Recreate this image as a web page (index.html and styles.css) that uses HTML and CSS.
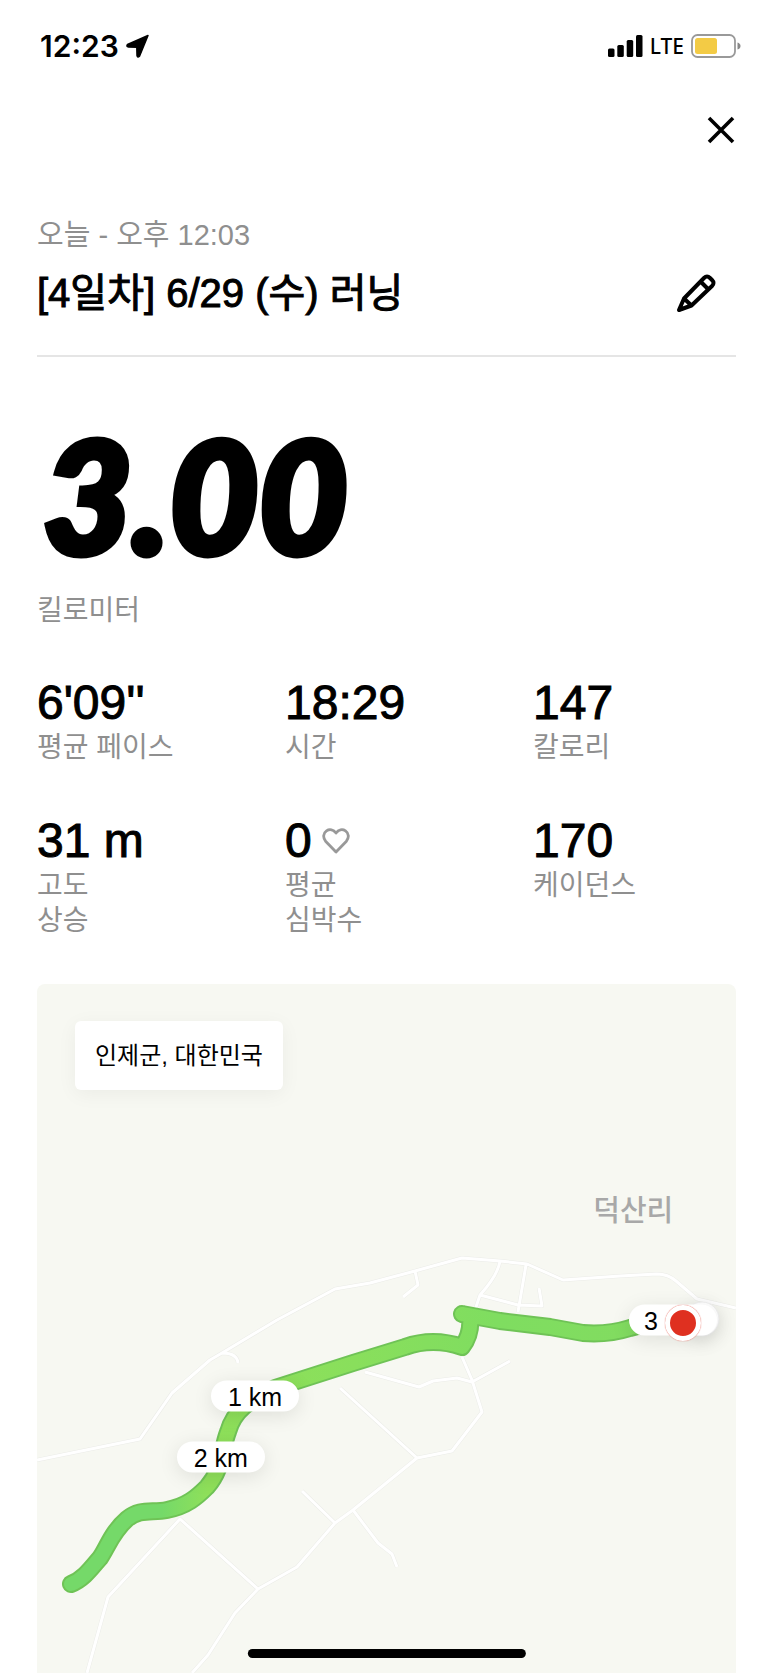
FILE: index.html
```html
<!DOCTYPE html>
<html lang="ko">
<head>
    <meta charset="UTF-8">
    <meta name="viewport" content="width=device-width, initial-scale=1.0">
    <title>[4일차] 6/29 (수) 러닝</title>
    <link rel="stylesheet" href="styles.css">
</head>
<body>

    <!-- 상태 표시줄 -->
    <div class="status-bar">
        <div class="status-left">
            <span class="status-time">12:23</span>
            <svg viewBox="0 0 24 24" width="24" height="24" aria-hidden="true">
                <path d="M22 1.5 13.5 22.2Q11.5 24 11 21.5L10.8 13.2 2.5 13Q0 12.5 1.5 10.5Z" stroke="#000" stroke-width="1.5" stroke-linejoin="round"/>
            </svg>
        </div>
        <div class="status-right">
            <svg viewBox="0 0 35 22" width="35" height="22" aria-hidden="true">
                <rect x="0" y="13.5" width="6.5" height="8.5" rx="1.5"/>
                <rect x="9.3" y="10" width="6.5" height="12" rx="1.5"/>
                <rect x="18.7" y="5" width="6.5" height="17" rx="1.5"/>
                <rect x="28" y="0" width="6.5" height="22" rx="1.5"/>
            </svg>
            <span class="status-network">LTE</span>
            <svg viewBox="0 0 50 24" width="50" height="24" aria-hidden="true">
                <rect x="1" y="1" width="43" height="22" rx="5.5" fill="none" stroke="#999" stroke-width="1.8"/>
                <rect x="4" y="4" width="22" height="16" rx="2.5" fill="#f3cb45"/>
                <path d="M46.5 8.5Q49.5 9.5 49.5 12T46.5 15.5Z" fill="#888"/>
            </svg>
        </div>
    </div>

    <div class="top-nav">
        <button class="icon-button" type="button" aria-label="닫기">
            <svg viewBox="0 0 28 28" width="28" height="28" aria-hidden="true">
                <path d="M2 2 26 26M26 2 2 26" fill="none" stroke="#000" stroke-width="3.6"/>
            </svg>
        </button>
    </div>

    <main class="run">
        <header class="run-header">
            <p class="run-date">오늘 - 오후 12:03</p>
            <div class="run-title-row">
                <h1 class="run-title">[4일차] 6/29 (수) 러닝</h1>
                <button class="icon-button" type="button" aria-label="제목 수정">
                    <svg viewBox="0 0 40 40" width="40" height="40" aria-hidden="true">
                        <path d="M3 37 8 25.5 28 5Q31 2 34 5L36 7Q39 10 36 13L15.5 32.5ZM24.5 8.5 32.5 16.5M8 25.5 15.5 32.5" fill="none" stroke="#000" stroke-width="4" stroke-linejoin="round"/>
                        <path d="M2 39 4.5 32 9 36.5Z"/>
                    </svg>
                </button>
            </div>
        </header>

        <!-- 총 거리 -->
        <section class="distance">
            <div class="distance-value">3.00</div>
            <div class="label">킬로미터</div>
        </section>

        <!-- 세부 기록 -->
        <section class="stats">
            <div class="stat">
                <div class="stat-value">6'09''</div>
                <div class="label">평균 페이스</div>
            </div>
            <div class="stat">
                <div class="stat-value">18:29</div>
                <div class="label">시간</div>
            </div>
            <div class="stat">
                <div class="stat-value">147</div>
                <div class="label">칼로리</div>
            </div>
            <div class="stat">
                <div class="stat-value">31 m</div>
                <div class="label">고도<br>상승</div>
            </div>
            <div class="stat">
                <div class="stat-value">0
                    <svg viewBox="0 0 28 26" width="28" height="26" aria-hidden="true">
                        <path d="M14 24 3.8 13.5C.5 9.8 1.3 5 4.5 2.8 7.5.8 11.5 1.5 14 5 16.5 1.5 20.5.8 23.5 2.8 26.7 5 27.5 9.8 24.2 13.5Z" fill="none" stroke="#999" stroke-width="2.8" stroke-linejoin="round"/>
                    </svg>
                </div>
                <div class="label">평균<br>심박수</div>
            </div>
            <div class="stat">
                <div class="stat-value">170</div>
                <div class="label">케이던스</div>
            </div>
        </section>

        <!-- 지도 -->
        <section class="map">
            <svg class="map-canvas" viewBox="37 984 699 689" aria-hidden="true">
                <defs>
                    <linearGradient id="pace" gradientUnits="userSpaceOnUse" x1="71" y1="0" x2="640" y2="0">
                        <stop offset="0" stop-color="#75d969"/>
                        <stop offset=".16" stop-color="#75d969"/>
                        <stop offset=".24" stop-color="#8fe05a"/>
                        <stop offset=".5" stop-color="#89df5c"/>
                        <stop offset=".75" stop-color="#7fdd60"/>
                        <stop offset="1" stop-color="#82dc60"/>
                    </linearGradient>
                    <path id="roads" d="M37 1460 140 1439 172 1393 210 1360 222 1353 277 1320 335 1289 370 1283 415 1271 462 1258 500 1261 527 1264 563 1280 620 1276 657 1274Q668 1274 676 1281L697 1299 736 1308
                        M415 1271 418 1285 403 1297
                        M500 1261Q498 1275 480 1295L475 1310
                        M526 1265 518 1312
                        M480 1295 518 1305 542 1306 539 1288
                        M462 1357 472 1380 482 1412 452 1451 417 1458 353 1510 335 1523 297 1567 258 1589 235 1613 208 1655 192 1673
                        M510 1361 472 1382 457 1378 433 1381 419 1387 365 1372
                        M340 1388 417 1458M302 1491 335 1523
                        M353 1510 378 1543 392 1554 397 1567
                        M258 1589 180 1519 108 1597 87 1673
                        M222 1353Q237 1353 238 1363"/>
                    <path id="route" d="M71 1584C84 1579 92 1567 100 1558C107 1548 112 1532 127 1519C140 1508 152 1513 167 1510C187 1506 197 1497 207 1487C223 1469 221 1450 228 1432C234 1410 250 1400 275 1388L353 1363 405 1347Q433 1337 462 1347 472 1334 470 1316L462 1314 500 1321 550 1327 583 1333Q608 1335 630 1328L660 1320"/>
                </defs>
                <use href="#roads" class="road-edge"/>
                <use href="#roads" class="road"/>
                <use href="#route" class="route-edge"/>
                <use href="#route" class="route"/>
            </svg>
            <span class="map-tag">인제군, 대한민국</span>
            <span class="map-place">덕산리</span>
            <span class="pin pin-km1">1 km</span>
            <span class="pin pin-km2">2 km</span>
            <span class="pin pin-start"></span>
            <span class="pin pin-km3">3</span>
            <span class="pin pin-end"></span>
        </section>
    </main>

    <div class="home-indicator"></div>

</body>
</html>
```

FILE: styles.css
```css
* {
    box-sizing: border-box;
}

body {
    margin: 0;
    background-color: #fff;
    color: #000;
    font-family: "Liberation Sans", "Noto Sans CJK KR", sans-serif;
}

h1, p {
    margin: 0;
}

svg {
    display: block;
}

.icon-button {
    padding: 0;
    border: none;
    background: none;
    cursor: pointer;
}

/* 상태 표시줄 */
.status-bar {
    display: flex;
    justify-content: space-between;
    align-items: center;
    height: 92px;
    padding: 0 32px 0 40px;
}

.status-left,
.status-right {
    display: flex;
    align-items: center;
    gap: 7px;
}

.status-time {
    font-family: Inter, sans-serif;
    font-size: 30px;
    font-weight: 600;
}

.status-network {
    font-family: "Noto Sans", sans-serif;
    font-size: 21px;
    font-weight: 500;
}

.top-nav {
    display: flex;
    justify-content: flex-end;
    align-items: center;
    height: 76px;
    padding: 0 38px;
}

.run {
    padding: 49px 37px 0;
}

.run-header {
    padding-bottom: 34px;
    border-bottom: 2px solid #e5e5e5;
}

.run-date {
    margin-bottom: 12px;
    color: #8f8f8f;
    font-size: 29px;
    line-height: 36px;
}

.run-title-row {
    display: flex;
    justify-content: space-between;
    align-items: center;
    padding-right: 20px;
}

.run-title {
    font-size: 40px;
    font-weight: 400;
    line-height: 56px;
    -webkit-text-stroke: 1px #000;
}

.label {
    color: #8f8f8f;
    font-size: 28px;
    line-height: 35px;
}

/* 총 거리 */
.distance {
    margin-top: 66px;
}

.distance-value {
    margin-bottom: 26px;
    padding-left: 6px;
    font-family: Lato, sans-serif;
    font-size: 154px;
    font-style: italic;
    font-weight: 900;
    line-height: 144px;
    -webkit-text-stroke: 7px #000;
}

/* 세부 기록 */
.stats {
    display: grid;
    grid-template-columns: 248px 248px 1fr;
    row-gap: 52px;
    margin-top: 51px;
}

.stat-value {
    display: flex;
    align-items: center;
    gap: 10px;
    margin-bottom: 3px;
    font-size: 48px;
    line-height: 48px;
    -webkit-text-stroke: 1px #000;
}

/* 지도 */
.map {
    position: relative;
    margin-top: 46px;
    overflow: hidden;
    border-radius: 8px 8px 0 0;
    background-color: #f7f8f2;
}

.map-canvas {
    width: 100%;
}

.road,
.road-edge,
.route,
.route-edge {
    fill: none;
    stroke-linejoin: round;
}

.road-edge {
    stroke: #ebece8;
    stroke-width: 4px;
}

.road {
    stroke: #fff;
    stroke-width: 3px;
}

.route-edge {
    stroke: #6fc356;
    stroke-width: 18px;
    stroke-linecap: round;
}

.route {
    stroke: url(#pace);
    stroke-width: 14px;
    stroke-linecap: round;
}

.map-tag {
    position: absolute;
    top: 37px;
    left: 38px;
    padding: 0 20px;
    border-radius: 6px;
    background-color: #fff;
    box-shadow: 0 4px 20px rgba(0, 0, 0, 0.05);
    font-size: 24px;
    line-height: 69px;
}

.map-place {
    position: absolute;
    top: 32.9%;
    left: 85.3%;
    transform: translate(-50%, -50%);
    color: #a8a8a8;
    font-size: 29px;
    font-weight: 500;
    line-height: 36px;
}

.pin {
    position: absolute;
    height: 31px;
    border-radius: 18px;
    background-color: #fff;
    box-shadow: 0 4px 20px rgba(0, 0, 0, 0.1);
    transform: translate(-50%, -50%);
    font-size: 25px;
    line-height: 32px;
    text-align: center;
    white-space: nowrap;
}

.pin-km1,
.pin-km2 {
    width: 88px;
}

.pin-km1 {
    top: 59.8%;
    left: 31.2%;
}

.pin-km2 {
    top: 68.7%;
    left: 26.3%;
}

.pin-km3 {
    top: 48.8%;
    left: 91%;
    width: 88px;
    padding-left: 15px;
    text-align: left;
}

.pin-start {
    top: 48.6%;
    left: 95.2%;
    width: 35px;
    height: 35px;
    border: 1px solid #eee;
}

.pin-end {
    top: 49.2%;
    left: 92.4%;
    width: 36px;
    height: 36px;
    border: 5px solid #fff;
    background-color: #df3020;
    box-shadow: 0 0 1px #df3020;
}

.home-indicator {
    position: fixed;
    bottom: 15px;
    left: 50%;
    width: 36%;
    height: 9px;
    border-radius: 5px;
    background-color: #000;
    transform: translateX(-50%);
}
```
